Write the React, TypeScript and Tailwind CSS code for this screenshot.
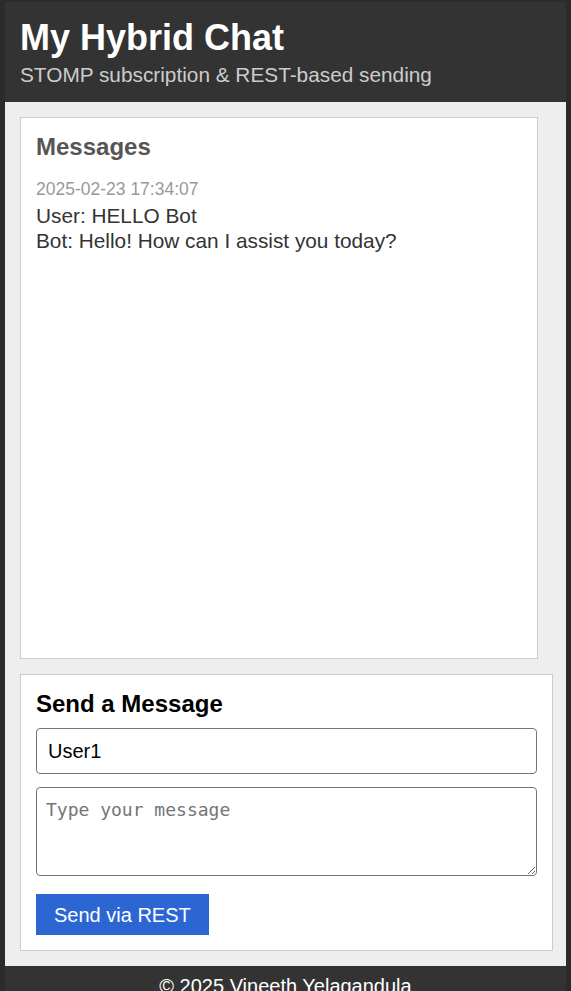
export default function App() {
  return (
    <div
      className="flex h-[991px] flex-col overflow-hidden bg-[#2b2b2b] px-[5px] pt-[2px]"
      style={{ fontFamily: '"Liberation Sans", Arial, sans-serif' }}
    >
      <header className="bg-[#333] px-[15px] pb-[15px] pt-[15px]">
        <h1 className="text-[36px] font-bold leading-[41px] text-white">My Hybrid Chat</h1>
        <p className="mt-[5px] text-[20.8px] leading-[24px] text-[#ccc]">
          STOMP subscription &amp; REST-based sending
        </p>
      </header>

      <main className="flex flex-1 flex-col gap-[15px] bg-[#eee] py-[15px] pl-[15px] pr-[13px]">
        <section className="mr-[15px] h-[542px] border border-[#ccc] bg-white p-[15px]">
          <h2 className="mb-[18px] text-[24px] font-bold leading-[28px] text-[#555]">Messages</h2>
          <div className="mb-[4px] text-[17.5px] leading-[20px] text-[#999]">2025-02-23 17:34:07</div>
          <div className="text-[20.8px] leading-[25px] text-[#333]">
            <div>User: HELLO Bot</div>
            <div>Bot: Hello! How can I assist you today?</div>
          </div>
        </section>

        <section className="border border-[#ccc] bg-white p-[15px]">
          <h2 className="mb-[10px] text-[24px] font-bold leading-[28px] text-black">Send a Message</h2>
          <input
            className="block h-[46px] w-full rounded-[4px] border border-[#767676] px-[11px] text-[20px] text-black outline-none"
            defaultValue="User1"
          />
          <textarea
            className="mt-[13px] block h-[89px] w-full rounded-[4px] border border-[#767676] px-[9px] py-[8px] text-[18px] outline-none placeholder:text-[#757575]"
            style={{ fontFamily: '"DejaVu Sans Mono", monospace' }}
            placeholder="Type your message"
          />
          <button className="mt-[18px] h-[41px] bg-[#2b66d3] px-[18px] text-[20px] text-white">
            Send via REST
          </button>
        </section>
      </main>

      <footer className="h-[40px] bg-[#333] pt-[8px] text-center text-[20px] leading-[24px] text-white">
        © 2025 Vineeth Yelagandula
      </footer>
    </div>
  );
}
